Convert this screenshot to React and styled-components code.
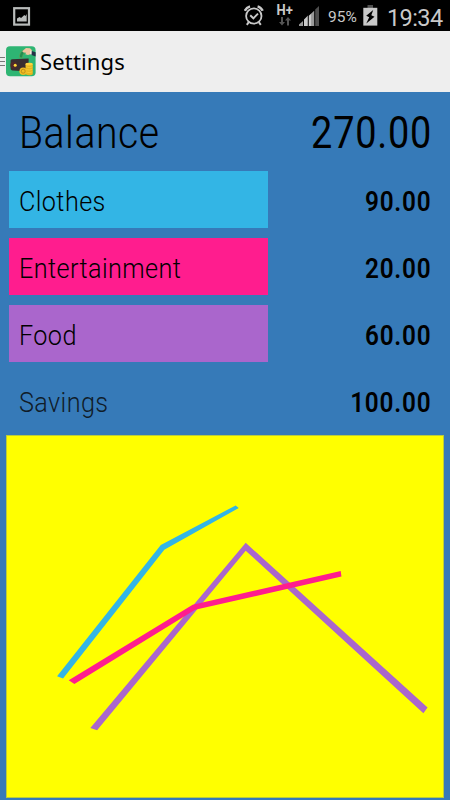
import React from "react";
import styled, { createGlobalStyle } from "styled-components";

const categories = [
  { name: "Clothes", amount: "90.00", color: "#33b5e5" },
  { name: "Entertainment", amount: "20.00", color: "#ff1d8e" },
  { name: "Food", amount: "60.00", color: "#aa66cc" },
  { name: "Savings", amount: "100.00", color: "transparent", muted: true },
];

const PictureIcon = () => (
  <svg width="18" height="20" viewBox="0 0 18 20">
    <rect x="1.2" y="1.2" width="14.8" height="16.4" fill="none" stroke="#b9bcbb" strokeWidth="2.2" />
    <path d="M4 14.5V11.6l2.5-1.7 1.6 1.2 3.2-3 1.2 1 1.2-2v7.4z" fill="#b9bcbb" />
  </svg>
);

const AlarmIcon = () => (
  <svg width="20" height="21" viewBox="0 0 20 21" fill="none" stroke="#c9c9c9">
    <circle cx="9.8" cy="11" r="7.7" strokeWidth="1.8" />
    <path d="M6.2 10.2l3.2 3.1 4.6-4.6" strokeWidth="1.9" />
    <path d="M.9 5.8C1.8 3.6 3.6 2 6 1.3M18.7 5.8C17.8 3.6 16 2 13.6 1.3" strokeWidth="2.4" />
    <path d="M4.8 17.2l-2 2.6M14.8 17.2l2 2.6" strokeWidth="2" />
  </svg>
);

const DataArrows = () => (
  <svg width="12" height="9" viewBox="0 0 12 9" fill="#555">
    <path d="M2 0h2v5h2L3 8.5 0 5h2zM8 8.5h2v-5h2L9 0 6 3.5h2z" />
  </svg>
);

const SignalIcon = () => (
  <svg width="21" height="20" viewBox="0 0 21 20">
    <path d="M0 20v-1.5L4 15v5z" fill="#999" />
    <path d="M5 20v-6.5L8 10.5V20zM9.8 20V9.7l3-2.7v13z" fill="#c9c9c9" />
    <path d="M8 20v-9.5l1-1V20zM12.8 20V7l2.4-2.3V20z" fill="#999" />
    <path d="M16.2 20V3.6L20 0v20z" fill="#4e4e4e" />
  </svg>
);

const BatteryIcon = () => (
  <svg width="15" height="21" viewBox="0 0 15 21">
    <rect x="4.5" width="5.5" height="3" fill="#4e4e4e" />
    <rect x=".3" y="2.8" width="14" height="17.8" fill="#c9c9c9" />
    <path d="M10.2 5L3.2 10.7l3 1.5-2.9 6.3 8.2-6.7-3.2-1.6z" fill="#000" />
  </svg>
);

const WalletIcon = () => (
  <svg width="30" height="31" viewBox="0 0 30 31">
    <rect y=".3" width="29.6" height="30" rx="4" fill="#2eb573" />
    <path d="M13.4 11.5c0-3.3 1-5.8 4.2-7.6l1.6 2.3c-2.2 1.2-2.4 3.3-2.8 5.8z" fill="#238c50" stroke="#65aa55" strokeWidth=".6" />
    <path d="M16.2 5.2L20 2l4 .3 1.8 1.8v3.6L22 9l-2.8-.8 1-1.4-2.8-.3z" fill="#efc5a0" />
    <path d="M24.3 4.6l1.7.6v3.4l-1.8-.4z" fill="#f6f3eb" />
    <path d="M25.7 5l3.9 1.3v4.3l-4-1.6z" fill="#253047" />
    <path d="M6 13.2l16.6-.8v13.2L6.6 24.5c-1.4-.2-2-.8-2-2V14.8c0-1 .4-1.5 1.4-1.6z" fill="#392e30" />
    <rect x="4.4" y="16" width="6.6" height="6.5" rx="3" fill="#51282a" />
    <circle cx="9.2" cy="19.2" r="1.5" fill="#ffdc38" />
    <path d="M19.5 18.3v10c2 1.3 5.6 1.3 7.3 0v-10z" fill="#e5b51e" />
    <ellipse cx="23.1" cy="18.2" rx="3.7" ry="1.4" fill="#ffd13c" />
    <path d="M20 20.8c2 .9 4.5.9 6.4 0M20 23.3c2 .9 4.5.9 6.4 0M20 25.8c2 .9 4.5.9 6.4 0" fill="none" stroke="#ffd13c" strokeWidth=".7" />
    <circle cx="17.2" cy="25.2" r="3.8" fill="#efbd23" />
    <circle cx="17.2" cy="25.2" r="2" fill="none" stroke="#b88919" strokeWidth=".9" />
  </svg>
);

const App = () => {
  return (
    <Screen>
      <GlobalStyle />
      <StatusBar>
        <PictureIcon />
        <StatusRight>
          <AlarmIcon />
          <Network>
            <span>H+</span>
            <DataArrows />
          </Network>
          <SignalIcon />
          <Percent>95%</Percent>
          <BatteryIcon />
          <Clock>19:34</Clock>
        </StatusRight>
      </StatusBar>
      <ActionBar>
        <DrawerHandle>
          <i />
          <i />
          <i />
        </DrawerHandle>
        <WalletIcon />
        <Title>Settings</Title>
      </ActionBar>
      <Content>
        <BalanceRow>
          <BalanceLabel>Balance</BalanceLabel>
          <BalanceAmount>270.00</BalanceAmount>
        </BalanceRow>
        <Rows>
          {categories.map((item) => (
            <Row key={item.name}>
              <Category color={item.color}>
                <CategoryName $muted={item.muted}>{item.name}</CategoryName>
              </Category>
              <Amount>{item.amount}</Amount>
            </Row>
          ))}
        </Rows>
        <Chart viewBox="6 435 438 363" preserveAspectRatio="none">
          <path d="M56.3 676.7L160.5 544.7 235.7 504.8 238.8 507.5 164 549.3 62.3 678.8z" fill="#33b5e5" />
          <path d="M89.7 728.5L245.8 542.4 428.5 708 424.3 713.8 245.8 550.3 96.5 730.8z" fill="#aa66cc" />
          <path d="M68 680.7L192.5 604.7 341.2 570.7 342 576.3 195 609.7 73.7 684.3z" fill="#ff1d8e" />
        </Chart>
      </Content>
    </Screen>
  );
};

export default App;

const GlobalStyle = createGlobalStyle`
  body {
    margin: 0;
    background: #367ab8;
  }

  * {
    box-sizing: border-box;
  }

  svg {
    display: block;
    flex-shrink: 0;
  }
`;

const Screen = styled.div`
  width: 450px;
  height: 800px;
  display: flex;
  flex-direction: column;
  overflow: hidden;
  color: #000;
  font-family: Roboto, sans-serif;
`;

const StatusBar = styled.div`
  height: 31px;
  padding: 7px 9px 0 13px;
  display: flex;
  justify-content: space-between;
  background: #000;
  color: #c9c9c9;
`;

const StatusRight = styled.div`
  display: flex;
  align-items: flex-end;
  height: 19px;
`;

const Network = styled.div`
  width: 17px;
  height: 21px;
  margin: 0 6px 0 12px;
  display: flex;
  flex-direction: column;
  align-items: center;
  justify-content: space-between;
  font-size: 14px;
  line-height: 10px;
  font-weight: 700;

  span {
    transform: scaleX(0.93);
  }
`;

const Percent = styled.span`
  width: 31px;
  margin: 0 4px 0 8px;
  font-size: 15.5px;
  line-height: 18px;
`;

const Clock = styled.span`
  width: 54px;
  margin-left: 9px;
  margin-bottom: -3px;
  font-size: 23.5px;
  line-height: 22px;
  letter-spacing: -0.6px;
`;

const ActionBar = styled.div`
  height: 60.5px;
  display: flex;
  align-items: center;
  background: #eee;
`;

const DrawerHandle = styled.div`
  width: 5px;
  margin-right: 1px;
  display: flex;
  flex-direction: column;
  gap: 3px;

  i {
    height: 1px;
    background: #777;
  }
`;

const Title = styled.h1`
  margin: 0 0 0 4px;
  font-family: "Noto Sans", sans-serif;
  font-size: 22px;
  font-weight: 400;
  letter-spacing: 0.15px;
`;

const Content = styled.div`
  flex: 1;
  display: flex;
  flex-direction: column;
  background: #367ab8;
`;

const BalanceRow = styled.div`
  height: 79.5px;
  padding: 4px 19px 0;
  display: flex;
  align-items: center;
  justify-content: space-between;
  font-size: 43.5px;
`;

const BalanceLabel = styled.span`
  font-weight: 300;
  letter-spacing: 0.6px;
  transform: scaleX(0.9);
  transform-origin: left;
`;

const BalanceAmount = styled.span`
  margin-right: -1px;
  font-weight: 400;
  letter-spacing: 0.9px;
  transform: scaleX(0.87);
  transform-origin: right;
`;

const Rows = styled.div`
  display: flex;
  flex-direction: column;
  gap: 10px;
  padding: 0 9px;
`;

const Row = styled.div`
  height: 57px;
  display: flex;
  align-items: center;
  justify-content: space-between;
  font-size: 28px;
`;

const Category = styled.div`
  width: 259px;
  height: 57px;
  padding: 3px 0 0 10px;
  display: flex;
  align-items: center;
  background: ${(props) => props.color};
`;

const CategoryName = styled.span`
  font-weight: 300;
  letter-spacing: 0.45px;
  color: ${(props) => (props.$muted ? "#101c28" : "#000")};
  transform: scaleX(0.9);
  transform-origin: left;
`;

const Amount = styled.span`
  padding-top: 3px;
  margin-right: 10px;
  font-weight: 600;
  letter-spacing: 0.9px;
  transform: scaleX(0.87);
  transform-origin: right;
`;

const Chart = styled.svg`
  width: 438px;
  height: 363px;
  margin: 6px 0 0 6px;
  background: #ff0;
  border: 1px solid #b9cb3c;
`;
